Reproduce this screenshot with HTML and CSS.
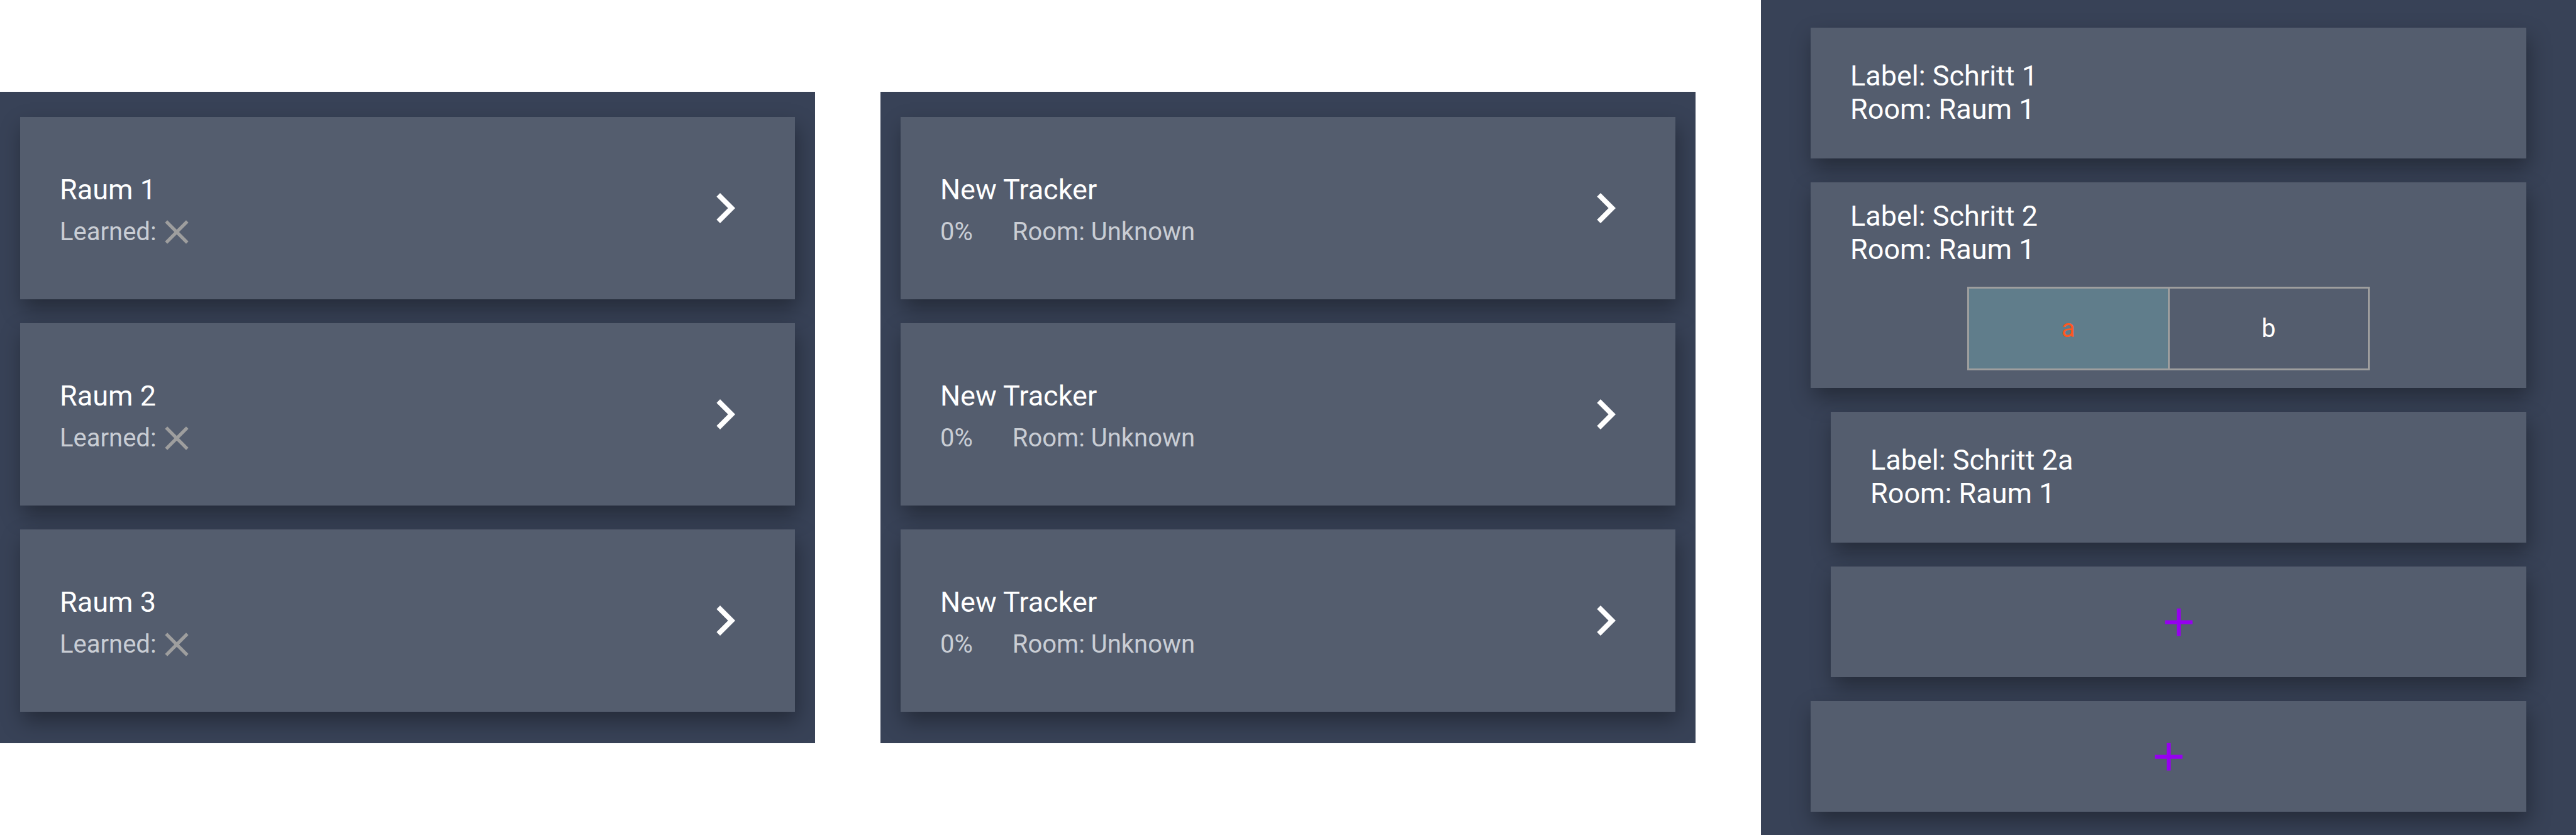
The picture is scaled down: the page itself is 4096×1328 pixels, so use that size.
FILE: index.html
```html
<!DOCTYPE html>
<html lang="en">
<head>
<meta charset="utf-8">
<title>Tracker</title>
<link rel="stylesheet" href="styles.css">
</head>
<body>
<svg class="sprite" aria-hidden="true">
  <symbol id="chevron" viewBox="0 0 24 24"><path d="M10 6 8.59 7.41 13.17 12l-4.58 4.59L10 18l6-6z"/></symbol>
  <symbol id="close" viewBox="0 0 24 24"><path d="M19 6.41 17.59 5 12 10.59 6.41 5 5 6.41 10.59 12 5 17.59 6.41 19 12 13.41 17.59 19 19 17.59 13.41 12z"/></symbol>
  <symbol id="plus" viewBox="0 0 24 24"><path d="M19 13h-6v6h-2v-6H5v-2h6V5h2v6h6z"/></symbol>
</svg>
<main class="screens">
  <section class="panel" aria-label="Rooms">
    <a class="card item" href="#raum-1">
      <span class="info"><span class="title">Raum 1</span><span class="detail learned">Learned:<svg class="close"><use href="#close"/></svg></span></span>
      <svg class="chevron"><use href="#chevron"/></svg>
    </a>
    <a class="card item" href="#raum-2">
      <span class="info"><span class="title">Raum 2</span><span class="detail learned">Learned:<svg class="close"><use href="#close"/></svg></span></span>
      <svg class="chevron"><use href="#chevron"/></svg>
    </a>
    <a class="card item" href="#raum-3">
      <span class="info"><span class="title">Raum 3</span><span class="detail learned">Learned:<svg class="close"><use href="#close"/></svg></span></span>
      <svg class="chevron"><use href="#chevron"/></svg>
    </a>
  </section>

  <section class="panel" aria-label="Trackers">
    <a class="card item" href="#tracker-1">
      <span class="info"><span class="title">New Tracker</span><span class="detail"><span>0%</span><span>Room: Unknown</span></span></span>
      <svg class="chevron"><use href="#chevron"/></svg>
    </a>
    <a class="card item" href="#tracker-2">
      <span class="info"><span class="title">New Tracker</span><span class="detail"><span>0%</span><span>Room: Unknown</span></span></span>
      <svg class="chevron"><use href="#chevron"/></svg>
    </a>
    <a class="card item" href="#tracker-3">
      <span class="info"><span class="title">New Tracker</span><span class="detail"><span>0%</span><span>Room: Unknown</span></span></span>
      <svg class="chevron"><use href="#chevron"/></svg>
    </a>
  </section>

  <section class="panel steps" aria-label="Steps">
    <article class="card step">
      <p class="title">Label: Schritt 1</p>
      <p class="title">Room: Raum 1</p>
    </article>
    <article class="card step branching">
      <p class="title">Label: Schritt 2</p>
      <p class="title">Room: Raum 1</p>
      <div class="toggle" role="group" aria-label="Branch">
        <button class="option selected" type="button" aria-pressed="true">a</button>
        <button class="option" type="button" aria-pressed="false">b</button>
      </div>
    </article>
    <article class="card step nested">
      <p class="title">Label: Schritt 2a</p>
      <p class="title">Room: Raum 1</p>
    </article>
    <button class="card add nested" type="button" aria-label="Add step to branch a"><svg class="plus"><use href="#plus"/></svg></button>
    <button class="card add" type="button" aria-label="Add step"><svg class="plus"><use href="#plus"/></svg></button>
  </section>
</main>
</body>
</html>
```
FILE: styles.css
```css
* {
  box-sizing: border-box;
}

body {
  margin: 0;
  background: #fff;
  color: #fff;
  font-family: Roboto, sans-serif;
  font-size: 45px;
  line-height: 53px;
}

.sprite {
  display: none;
}

.screens {
  display: grid;
  grid-template-columns: repeat(3, 1fr);
  column-gap: 104px;
  align-items: center;
  min-height: 100vh;
}

.panel {
  display: flex;
  flex-direction: column;
  gap: 38px;
  padding: 40px 32px 50px;
  overflow: hidden;
  background: #384257;
}

.card {
  border: 0;
  background: #545d6e;
  box-shadow: 4px 16px 32px rgba(0, 0, 0, 0.34);
}

.item {
  display: flex;
  align-items: center;
  justify-content: space-between;
  min-height: 290px;
  padding: 0 63px;
  color: #fff;
  text-decoration: none;
}

.info {
  display: flex;
  flex-direction: column;
  gap: 17px;
  padding-top: 5px;
}

.title {
  margin: 0;
}

.detail {
  display: flex;
  align-items: center;
  gap: 63px;
  height: 47px;
  color: #c9cdd4;
  font-size: 40px;
  line-height: 47px;
}

.learned {
  gap: 0;
}

.close {
  width: 64px;
  height: 64px;
  fill: #9e9e9e;
}

.chevron {
  width: 96px;
  height: 96px;
  fill: #fff;
}

.steps {
  align-self: stretch;
  padding: 44px 79px 37px;
}

.step {
  padding: 50px 63px 52px;
}

.branching {
  display: flex;
  flex-direction: column;
  padding: 27px 63px 28px;
}

.nested {
  margin-left: 32px;
}

.toggle {
  display: flex;
  align-self: center;
  width: 640px;
  height: 133px;
  margin-top: 33px;
  border: 3px solid #9e9e9e;
}

.option {
  flex: 1;
  padding: 0;
  border: 0;
  background: transparent;
  color: #fff;
  font: inherit;
  font-size: 40px;
}

.option + .option {
  border-left: 3px solid #9e9e9e;
}

.selected {
  background: #607d8b;
  color: #ff5722;
}

.add {
  display: flex;
  align-items: center;
  justify-content: center;
  min-height: 176px;
  padding: 0;
}

.plus {
  width: 75px;
  height: 75px;
  fill: #9600f0;
}
```
